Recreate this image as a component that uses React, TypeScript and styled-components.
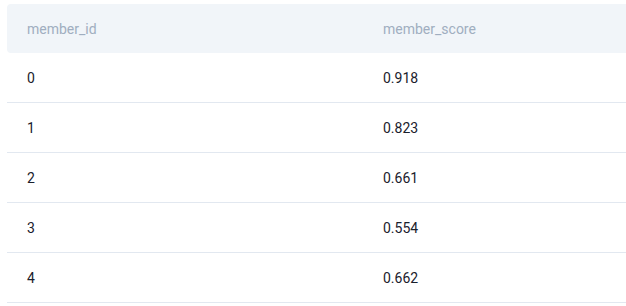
import styled, { createGlobalStyle } from 'styled-components';

const GlobalStyle = createGlobalStyle`
  html, body {
    margin: 0;
    padding: 0;
    background: #ffffff;
    overflow: hidden;
  }
`;

const Page = styled.div`
  padding: 4px 0 0 7px;
  overflow: hidden;
`;

const Table = styled.table`
  width: 712px;
  border-collapse: collapse;
  border-spacing: 0;
  table-layout: fixed;
  font-family: Roboto, 'Liberation Sans', sans-serif;
  font-size: 14px;
`;

const HeadCell = styled.th`
  height: 49px;
  padding: 0 20px;
  text-align: left;
  font-weight: 400;
  color: #a0aec0;
  background-color: #f1f5f9;

  &:first-child {
    border-radius: 4px 0 0 4px;
  }
  &:last-child {
    border-radius: 0 4px 4px 0;
  }
`;

const Row = styled.tr`
  border-bottom: 1px solid #e2e8f0;
`;

const Cell = styled.td`
  height: 49px;
  padding: 0 20px;
  color: #1a202c;
`;

const rows = [
  { id: 0, score: 0.918 },
  { id: 1, score: 0.823 },
  { id: 2, score: 0.661 },
  { id: 3, score: 0.554 },
  { id: 4, score: 0.662 },
];

const App = () => {
  return (
    <>
      <GlobalStyle />
      <Page>
        <Table>
          <thead>
            <tr>
              <HeadCell>member_id</HeadCell>
              <HeadCell>member_score</HeadCell>
            </tr>
          </thead>
          <tbody>
            {rows.map(row => (
              <Row key={row.id}>
                <Cell>{row.id}</Cell>
                <Cell>{row.score.toFixed(3)}</Cell>
              </Row>
            ))}
          </tbody>
        </Table>
      </Page>
    </>
  );
};

export default App;
